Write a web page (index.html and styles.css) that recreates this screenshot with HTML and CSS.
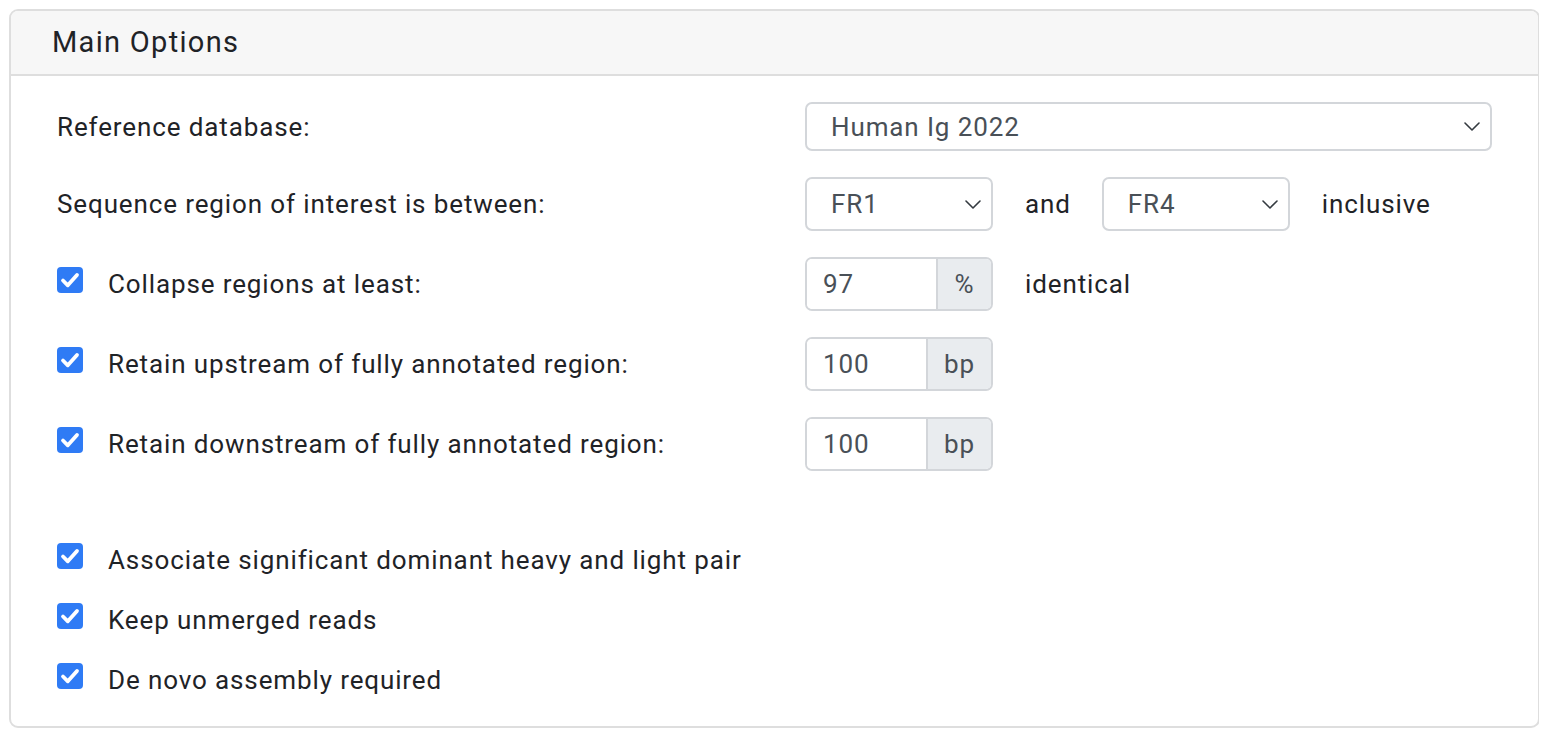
FILE: index.html
```html
<!DOCTYPE html>
<html>
<head>
<meta charset="utf-8">
<link rel="stylesheet" href="styles.css">
</head>
<body>
<div class="panel">
  <div class="panel-head">Main Options</div>
  <div class="panel-body">
    <div class="row row-first">
      <div class="label">Reference database:</div>
      <div class="controls">
        <div class="select select-wide">
          <span>Human Ig 2022</span>
          <svg class="chev" width="16" height="9" viewBox="0 0 16 9"><path d="M1 1l7 7 7-7" fill="none" stroke="#343a40" stroke-width="1.6" stroke-linecap="round" stroke-linejoin="round"/></svg>
        </div>
      </div>
    </div>
    <div class="row">
      <div class="label">Sequence region of interest is between:</div>
      <div class="controls">
        <div class="select select-small">
          <span>FR1</span>
          <svg class="chev" width="16" height="9" viewBox="0 0 16 9"><path d="M1 1l7 7 7-7" fill="none" stroke="#343a40" stroke-width="1.6" stroke-linecap="round" stroke-linejoin="round"/></svg>
        </div>
        <span class="text">and</span>
        <div class="select select-small">
          <span>FR4</span>
          <svg class="chev" width="16" height="9" viewBox="0 0 16 9"><path d="M1 1l7 7 7-7" fill="none" stroke="#343a40" stroke-width="1.6" stroke-linecap="round" stroke-linejoin="round"/></svg>
        </div>
        <span class="text">inclusive</span>
      </div>
    </div>
    <div class="row">
      <div class="label check-label"><span class="cb"><svg width="26" height="26" viewBox="0 0 26 26"><path d="M6 13.5l4.8 4.8L20 8" fill="none" stroke="#fff" stroke-width="3.8" stroke-linecap="round" stroke-linejoin="round"/></svg></span>Collapse regions at least:</div>
      <div class="controls">
        <div class="igroup">
          <div class="ivalue">97</div>
          <div class="addon addon-pct">%</div>
        </div>
        <span class="text">identical</span>
      </div>
    </div>
    <div class="row">
      <div class="label check-label"><span class="cb"><svg width="26" height="26" viewBox="0 0 26 26"><path d="M6 13.5l4.8 4.8L20 8" fill="none" stroke="#fff" stroke-width="3.8" stroke-linecap="round" stroke-linejoin="round"/></svg></span>Retain upstream of fully annotated region:</div>
      <div class="controls">
        <div class="igroup">
          <div class="ivalue">100</div>
          <div class="addon addon-bp">bp</div>
        </div>
      </div>
    </div>
    <div class="row">
      <div class="label check-label"><span class="cb"><svg width="26" height="26" viewBox="0 0 26 26"><path d="M6 13.5l4.8 4.8L20 8" fill="none" stroke="#fff" stroke-width="3.8" stroke-linecap="round" stroke-linejoin="round"/></svg></span>Retain downstream of fully annotated region:</div>
      <div class="controls">
        <div class="igroup">
          <div class="ivalue">100</div>
          <div class="addon addon-bp">bp</div>
        </div>
      </div>
    </div>
    <div class="checks">
      <div class="check-label crow"><span class="cb"><svg width="26" height="26" viewBox="0 0 26 26"><path d="M6 13.5l4.8 4.8L20 8" fill="none" stroke="#fff" stroke-width="3.8" stroke-linecap="round" stroke-linejoin="round"/></svg></span>Associate significant dominant heavy and light pair</div>
      <div class="check-label crow"><span class="cb"><svg width="26" height="26" viewBox="0 0 26 26"><path d="M6 13.5l4.8 4.8L20 8" fill="none" stroke="#fff" stroke-width="3.8" stroke-linecap="round" stroke-linejoin="round"/></svg></span>Keep unmerged reads</div>
      <div class="check-label crow"><span class="cb"><svg width="26" height="26" viewBox="0 0 26 26"><path d="M6 13.5l4.8 4.8L20 8" fill="none" stroke="#fff" stroke-width="3.8" stroke-linecap="round" stroke-linejoin="round"/></svg></span>De novo assembly required</div>
    </div>
  </div>
</div>
</body>
</html>
```
FILE: styles.css
```css
* { box-sizing: border-box; }
html, body { background: #fff; }
body {
  margin: 9px;
  font-family: Roboto, "Liberation Sans", sans-serif;
  color: #1f2327;
  font-size: 26px;
  letter-spacing: 0.88px;
}
.panel {
  width: 1531px;
  height: 719px;
  border: 2px solid #dedede;
  border-radius: 9px;
  overflow: hidden;
}
.panel-head {
  height: 65px;
  background: #f7f7f7;
  border-bottom: 2px solid #dedede;
  padding-left: 41px;
  font-size: 29px;
  letter-spacing: 1.3px;
  line-height: 63px;
}
.panel-body {
  padding: 26px 46px 0 46px;
}
.row {
  display: grid;
  grid-template-columns: 748px 1fr;
  align-items: center;
  height: 54px;
  margin-bottom: 26px;
}
.row-first { height: 49px; margin-bottom: 26px; }
.controls {
  display: flex;
  align-items: center;
  height: 100%;
}
.select {
  height: 100%;
  border: 2px solid #d3d6da;
  border-radius: 7px;
  display: flex;
  align-items: center;
  justify-content: space-between;
  padding: 0 10px 0 24px;
  color: #495057;
  background: #fff;
}
.select-wide { width: 687px; }
.select-small { width: 188px; }
.chev { display: block; }
.text { margin: 0 31px 0 32px; }
.check-label {
  display: flex;
  align-items: center;
}
.cb {
  width: 26px;
  height: 26px;
  border-radius: 4px;
  background: #2f7bf5;
  display: flex;
  align-items: center;
  justify-content: center;
  margin-right: 25px;
  margin-bottom: 8px;
  flex: none;
}
.cb svg { display: block; }
.igroup {
  width: 188px;
  height: 100%;
  display: flex;
  border: 2px solid #d3d6da;
  border-radius: 7px;
  overflow: hidden;
}
.ivalue {
  flex: 1;
  display: flex;
  align-items: center;
  padding-left: 16px;
  color: #495057;
  background: #fff;
}
.addon {
  background: #e9ecef;
  border-left: 2px solid #d3d6da;
  display: flex;
  align-items: center;
  justify-content: center;
  color: #495057;
}
.addon-pct { width: 55px; }
.addon-bp { width: 65px; }
.checks {
  padding-top: 45px;
}
.crow {
  height: 36px;
  margin-bottom: 24px;
}
```
